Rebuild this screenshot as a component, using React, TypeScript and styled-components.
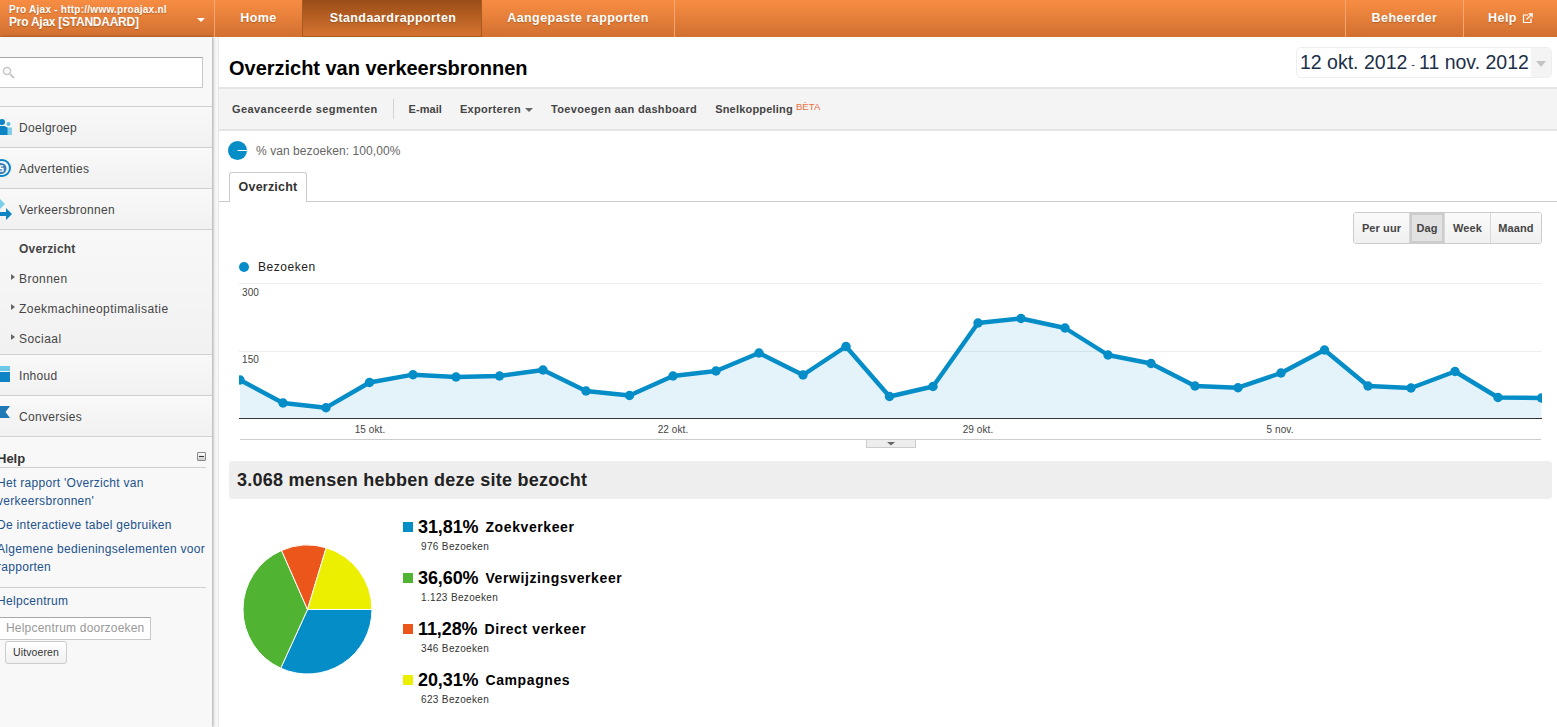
import React from "react";
import styled, { createGlobalStyle } from "styled-components";

const Global = createGlobalStyle`
  html, body { margin: 0; padding: 0; height: 100%; overflow: hidden; background: #fff; }
  body { font-family: "Liberation Sans", Arial, sans-serif; font-size: 12px; color: #333; }
  #root { height: 100%; }
`;

const Page = styled.div`
  width: 1557px; height: 727px; overflow: hidden; display: flex; flex-direction: column;
`;
const TopBar = styled.header`
  flex: none; height: 37px; display: flex; color: #fff;
  background: linear-gradient(#f78d43, #d27030);
`;
const Account = styled.div`
  width: 215px; box-sizing: border-box; border-right: 1px solid #f5a671;
  padding: 4px 0 0 9px; position: relative; font-weight: bold; text-shadow: 0 1px 1px rgba(120,60,10,.45);
`;
const AccountUrl = styled.div`font-size: 10px; line-height: 11px; letter-spacing: .25px; white-space: nowrap;`;
const AccountName = styled.div`font-size: 12px; line-height: 14px; letter-spacing: -.25px; white-space: nowrap;`;
const Caret = styled.span`
  position: absolute; right: 9px; top: 18px; width: 0; height: 0;
  border-left: 4px solid transparent; border-right: 4px solid transparent; border-top: 4px solid #fff;
`;
const NavItem = styled.a<{ $w: number; $active?: boolean; $last?: boolean }>`
  flex: none; width: ${(p) => p.$w}px; box-sizing: border-box; display: flex; align-items: center; justify-content: center; gap: 5px;
  font-size: 12.5px; font-weight: bold; letter-spacing: .45px;
  border-right: ${(p) => (p.$last ? "0" : "1px solid #f5a671")};
  text-shadow: 0 1px 1px rgba(120,60,10,.45); padding-bottom: 1px;
  ${(p) => p.$active && `background: linear-gradient(#9a4d17, #d67431); border: 1px solid #a85a20; border-top: 0; margin-left: -1px; width: ${p.$w + 1}px; padding-left: 2px; letter-spacing: .4px;`}
`;
const NavSpacer = styled.div`flex: 1; border-right: 1px solid #f5a671;`;

const Body = styled.div`flex: 1; display: flex; min-height: 0;`;
const Sidebar = styled.aside`
  flex: none; width: 212px; box-sizing: border-box; background: #f8f8f8; overflow: hidden;
  box-shadow: 1px 0 3px rgba(0,0,0,.35); position: relative; z-index: 1;
`;
const Gutter = styled.div`flex: none; width: 7px; background: #f8f8f8; border-right: 1px solid #e6e6e6; box-sizing: border-box;`;
const SearchWrap = styled.div`height: 70px; box-sizing: border-box; padding: 20px 9px 0 0; border-bottom: 1px solid #d0d0d0;`;
const SearchBox = styled.div`
  height: 31px; box-sizing: border-box; margin-left: -3px; background: #fff; border: 1px solid #c8c8c8; border-top-color: #a8a8a8;
  display: flex; align-items: center; padding-left: 4px;
`;
const SectionRow = styled.div`
  height: 41px; box-sizing: border-box; border-bottom: 1px solid #d0d0d0; display: flex; align-items: center; gap: 7px;
  background: linear-gradient(#f9f9f9, #f1f1f1); font-size: 12px; color: #444; letter-spacing: .3px; padding-top: 1px;
`;
const IconSlot = styled.span`flex: none; width: 12px; height: 22px; display: block;`;
const SubList = styled.div`
  height: 125px; box-sizing: border-box; border-bottom: 1px solid #d0d0d0; padding-top: 4px; background: linear-gradient(#f8f8f8, #f1f1f1);
`;
const SubItem = styled.div<{ $bold?: boolean; $arrow?: boolean }>`
  height: 30px; line-height: 30px; padding-left: 19px; position: relative; color: #444; font-size: 12px; letter-spacing: ${(p) => (p.$bold ? ".2px" : ".45px")};
  font-weight: ${(p) => (p.$bold ? "bold" : "normal")};
  ${(p) => p.$arrow && `&::before { content: ""; position: absolute; left: 11px; top: 10px; border-left: 4px solid #666; border-top: 3.5px solid transparent; border-bottom: 3.5px solid transparent; }`}
`;
const HelpBlock = styled.div`padding: 12px 6px 0 0; margin-left: -3px;`;
const HelpHead = styled.div`
  height: 18px; border-bottom: 1px solid #d0d0d0; display: flex; justify-content: space-between; align-items: center;
  font-weight: bold; font-size: 13px; color: #333; margin-bottom: 6px;
`;
const Collapse = styled.span`
  width: 7px; height: 7px; border: 1px solid #888; border-radius: 1px; background: linear-gradient(#fff,#ccc); position: relative; margin-top: -3px;
  &::after { content: ""; position: absolute; left: 1px; right: 1px; top: 3px; height: 1px; background: #333; }
`;
const HelpLinks = styled.div`margin-right: -6px;`;
const HelpLink = styled.a`display: block; color: #22528c; font-size: 12px; line-height: 18px; margin-bottom: 6px; letter-spacing: .3px;`;
const HelpRule = styled.div`border-top: 1px solid #d0d0d0; margin-top: 11px; padding-top: 4px;`;
const HelpSearch = styled.div`
  width: 154px; height: 23px; box-sizing: border-box; background: #fff; border: 1px solid #c8c8c8; border-top-color: #a8a8a8; margin-top: 7px;
  color: #999; font-size: 12px; line-height: 21px; padding-left: 8px; letter-spacing: .2px; white-space: nowrap;
`;
const RunButton = styled.div`
  width: 62px; height: 23px; box-sizing: border-box; margin: 1px 0 0 8px; border: 1px solid #ccc; border-radius: 3px; text-align: center; line-height: 21px;
  font-size: 10.5px; color: #333; background: linear-gradient(#fff, #f0f0f0); letter-spacing: .1px;
`;

const Main = styled.main`flex: 1; min-width: 0; display: flex; flex-direction: column;`;
const TitleRow = styled.div`height: 50px; box-sizing: border-box; display: flex; justify-content: space-between; padding: 10px 5px 0 10px;`;
const Title = styled.h1`margin: 9px 0 0; font-size: 20px; line-height: 24px; font-weight: bold; color: #000; letter-spacing: -.02px;`;
const DateBox = styled.div`
  height: 31px; box-sizing: border-box; width: 256px; border: 1px solid #eee; border-radius: 5px; display: flex; align-items: center; padding-left: 3px;
  font-size: 19.5px; color: #1c2f48; position: relative; overflow: hidden; white-space: nowrap; letter-spacing: 0;
`;
const DateDash = styled.span`font-size: 11px; margin: 3px 4px 0;`;
const DateArrow = styled.span`
  position: absolute; right: 0; top: 0; bottom: 0; width: 20px; background: #f4f4f4;
  &::after { content: ""; position: absolute; left: 5px; top: 13px; border-left: 5.5px solid transparent; border-right: 5.5px solid transparent; border-top: 6px solid #c4c4c4; }
`;
const Toolbar = styled.div`
  height: 44px; box-sizing: border-box; background: #f4f4f4; border-top: 2px solid #e5e5e5; border-bottom: 2px solid #e5e5e5;
  display: flex; align-items: center; padding-left: 13px; font-size: 11px; font-weight: bold; color: #444;
`;
const ToolItem = styled.span<{ $ml?: number; $ls: number }>`margin-left: ${(p) => p.$ml ?? 0}px; letter-spacing: ${(p) => p.$ls}px; white-space: nowrap;`;
const ToolSep = styled.span`width: 1px; height: 20px; background: #d4d4d4; margin-left: 15px;`;
const ToolCaret = styled.span`display: inline-block; margin-left: 4px; vertical-align: 1px; border-left: 4px solid transparent; border-right: 4px solid transparent; border-top: 4px solid #666;`;
const Beta = styled.span`font-size: 9.5px; font-weight: normal; color: #e8703a; margin-left: 3px; position: relative; top: -3px; letter-spacing: .1px;`;
const SegmentRow = styled.div`height: 41px; box-sizing: border-box; padding: 0 0 2px 9px; display: flex; align-items: center; gap: 9px; color: #666; letter-spacing: .07px; font-size: 12px;`;
const TabRow = styled.div`height: 30px; box-sizing: border-box; border-bottom: 1px solid #ccc; padding-left: 10px; display: flex;`;
const Tab = styled.div`
  width: 78px; height: 30px; box-sizing: border-box; border: 1px solid #ccc; border-bottom: 0; border-radius: 3px 3px 0 0; background: #fff;
  text-align: center; line-height: 29px; font-size: 12.5px; font-weight: bold; color: #333; letter-spacing: .2px;
`;
const RangeRow = styled.div`display: flex; justify-content: flex-end; padding: 10px 15px 0 0;`;
const RangeGroup = styled.div`display: flex; height: 32px; box-sizing: border-box; border: 1px solid #ccc; border-radius: 3px; overflow: hidden;`;
const RangeBtn = styled.div<{ $w: number; $active?: boolean }>`
  width: ${(p) => p.$w}px; box-sizing: border-box; text-align: center; line-height: 30px; font-size: 11px; font-weight: bold; color: #444; letter-spacing: .1px;
  background: ${(p) => (p.$active ? "#e2e2e2" : "linear-gradient(#fafafa,#f0f0f0)")};
  ${(p) => p.$active && "box-shadow: inset 0 0 0 2px #ccc;"}
  & + & { border-left: 1px solid #d8d8d8; }
`;
const Legend = styled.div`height: 21px; margin-top: 12px; display: flex; align-items: center; gap: 9px; padding-left: 20px; font-size: 12px; color: #222; letter-spacing: .55px;`;
const LegendDot = styled.span`width: 10px; height: 10px; border-radius: 50%; background: #058dc7;`;
const ChartSvg = styled.svg`display: block; flex: none; text { font-family: "Liberation Sans", Arial, sans-serif; font-size: 10px; fill: #444; letter-spacing: .1px; }`;
const Banner = styled.div`
  margin: 12px 5px 0 10px; height: 38px; background: #eee; border-radius: 4px; display: flex; align-items: center; padding-left: 8px;
  font-size: 18px; font-weight: bold; color: #222; letter-spacing: .25px;
`;
const Breakdown = styled.div`display: flex; margin-top: 17px; padding-left: 22px;`;
const PieSvg = styled.svg`display: block; flex: none; margin-top: 27px;`;
const LegendList = styled.div`margin-left: 30px; display: flex; flex-direction: column;`;
const Entry = styled.div`height: 51px;`;
const EntryHead = styled.div`display: flex; align-items: center; height: 22px; color: #000; font-weight: bold; white-space: nowrap;`;
const Swatch = styled.span<{ $c: string }>`width: 10px; height: 10px; background: ${(p) => p.$c}; margin-right: 5px;`;
const Pct = styled.span`font-size: 18px; margin-right: 7px; letter-spacing: -.1px;`;
const Name = styled.span`font-size: 14px; letter-spacing: .6px;`;
const EntrySub = styled.div`font-size: 10px; color: #333; padding-left: 18px; line-height: 13px; margin-top: 2px; letter-spacing: .35px;`;

const points: [number, number][] = [
  [240, 380], [283, 403], [326, 407.7], [369.5, 382.5], [413, 374.7], [456, 377], [499.5, 376], [543, 370], [586, 391],
  [629.5, 395.5], [673, 376], [716, 371], [759, 353], [803, 375], [846, 346.5], [889.5, 396.5], [933, 386.5], [978, 323],
  [1021, 318.5], [1065, 328], [1108, 355], [1151, 363.5], [1195, 386], [1238, 387.7], [1281, 373], [1324.5, 350], [1368, 386],
  [1411, 388], [1455, 371.5], [1498, 397.5], [1541.5, 398],
];
const OX = 219, OY = 277;
const px = (x: number) => x - OX;
const py = (y: number) => y - OY;

function Chart() {
  const line = points.map(([x, y]) => `${px(x)},${py(y)}`).join(" ");
  const area = `${px(240)},${py(418)} ${line} ${px(1541.5)},${py(418)}`;
  return (
    <ChartSvg width={1338} height={172} viewBox="0 0 1338 172">
      <defs>
        <clipPath id="plot">
          <rect x={px(239)} y={py(280)} width={1303} height={140} />
        </clipPath>
      </defs>
      <line x1={px(239)} x2={px(1542)} y1={py(283.5)} y2={py(283.5)} stroke="#eee" />
      <line x1={px(239)} x2={px(1542)} y1={py(351.5)} y2={py(351.5)} stroke="#eee" />
      <polygon points={area} fill="#058dc7" fillOpacity={0.11} />
      <line x1={px(239)} x2={px(1542)} y1={py(418.5)} y2={py(418.5)} stroke="#333" />
      <line x1={px(240)} x2={px(1541)} y1={py(439.5)} y2={py(439.5)} stroke="#ccc" />
      <g clipPath="url(#plot)">
        <polyline points={line} fill="none" stroke="#058dc7" strokeWidth={4.4} strokeLinejoin="round" />
        {points.map(([x, y]) => (
          <circle key={x} cx={px(x)} cy={py(y)} r={4.7} fill="#058dc7" />
        ))}
      </g>
      <text x={px(242)} y={py(296)}>300</text>
      <text x={px(242)} y={py(363)}>150</text>
      <text x={px(370)} y={py(433)} textAnchor="middle">15 okt.</text>
      <text x={px(673)} y={py(433)} textAnchor="middle">22 okt.</text>
      <text x={px(978)} y={py(433)} textAnchor="middle">29 okt.</text>
      <text x={px(1280)} y={py(433)} textAnchor="middle">5 nov.</text>
      <rect x={px(866.5)} y={py(439.5)} width={49} height={8} fill="#ededed" stroke="#ccc" />
      <polygon points={`${px(887)},${py(442)} ${px(895)},${py(442)} ${px(891)},${py(445.5)}`} fill="#666" />
    </ChartSvg>
  );
}

const slices = [
  { pct: 31.81, label: "31,81%", name: "Zoekverkeer", sub: "976 Bezoeken", color: "#058dc7" },
  { pct: 36.6, label: "36,60%", name: "Verwijzingsverkeer", sub: "1.123 Bezoeken", color: "#50b432" },
  { pct: 11.28, label: "11,28%", name: "Direct verkeer", sub: "346 Bezoeken", color: "#ed561b" },
  { pct: 20.31, label: "20,31%", name: "Campagnes", sub: "623 Bezoeken", color: "#edef00" },
];

function Pie() {
  let acc = 0;
  const R = 64.5, C = 66.5;
  return (
    <PieSvg width={132} height={132} viewBox="0 0 132 132">
      {slices.map((s) => {
        const a0 = (acc / 100) * Math.PI * 2;
        acc += s.pct;
        const a1 = (acc / 100) * Math.PI * 2;
        const d = `M${C} ${C}L${C + R * Math.cos(a0)} ${C + R * Math.sin(a0)}A${R} ${R} 0 ${s.pct > 50 ? 1 : 0} 1 ${C + R * Math.cos(a1)} ${C + R * Math.sin(a1)}Z`;
        return <path key={s.name} d={d} fill={s.color} stroke="#fff" strokeWidth={1} strokeLinejoin="round" />;
      })}
    </PieSvg>
  );
}

const PeopleIcon = () => (
  <svg width="12" height="22" viewBox="0 0 12 22">
    <circle cx="8.5" cy="7" r="2" fill="#58bfe3" />
    <path d="M6 10.5h6V18H6z" fill="#7fcde8" />
    <circle cx="2" cy="5" r="3" fill="#0d85c4" />
    <path d="M-3 9h7.5l3 1.5V18H-3z" fill="#0d85c4" />
  </svg>
);
const AdsIcon = () => (
  <svg width="12" height="22" viewBox="0 0 12 22">
    <circle cx="2" cy="10" r="9" fill="#0d85c4" />
    <circle cx="2" cy="10" r="7" fill="#f0f6fa" />
    <circle cx="1" cy="10.5" r="5.5" fill="#3d7fb5" />
    <path d="M3.2 7.8H.2v2.7h2.8v2.7H-1" fill="none" stroke="#fff" strokeWidth="1.3" />
  </svg>
);
const TrafficIcon = () => (
  <svg width="12" height="22" viewBox="0 0 12 22">
    <path d="M0 0l5 5-5 5-5-5z" fill="#78cfe9" />
    <path d="M-2 13h8V9l6 6-6 6v-4h-8z" fill="#0d85c4" />
  </svg>
);
const ContentIcon = () => (
  <svg width="12" height="22" viewBox="0 0 12 22">
    <path d="M0 1h10v5H0z" fill="#6ccae8" />
    <path d="M0 7h10v10H0z" fill="#0d85c4" />
  </svg>
);
const FlagIcon = () => (
  <svg width="12" height="22" viewBox="0 0 12 22">
    <path d="M0 0h10L5.5 6 10 12H0z" fill="#1f79b4" />
  </svg>
);

const SearchIcon = () => (
  <svg width="13" height="13" viewBox="0 0 13 13" fill="none" stroke="#c8c8c8">
    <circle cx="5" cy="5" r="3.5" strokeWidth="1.6" />
    <path d="M8 8l4 4" strokeWidth="2.2" />
  </svg>
);
const ExternalIcon = () => (
  <svg width="11" height="11" viewBox="0 0 11 11" fill="none" stroke="#fff" strokeWidth="1.2">
    <path d="M6 2H1.5v7.5H9V5.5" />
    <path d="M4.5 6.5L10 1M6.5 .8H10.2V4.5" />
  </svg>
);
const SegmentIcon = () => (
  <svg width="19" height="19" viewBox="0 0 19 19" style={{ flex: "none" }}>
    <circle cx="9.5" cy="9.5" r="9.5" fill="#058dc7" />
    <path d="M9.5 9.5H19" stroke="#fff" strokeWidth="1" />
  </svg>
);

export default function App() {
  return (
    <Page>
      <Global />
      <TopBar>
        <Account>
          <AccountUrl>Pro Ajax - http://www.proajax.nl</AccountUrl>
          <AccountName>Pro Ajax [STANDAARD]</AccountName>
          <Caret />
        </Account>
        <NavItem $w={88}>Home</NavItem>
        <NavItem $w={179} $active>Standaardrapporten</NavItem>
        <NavItem $w={193}>Aangepaste rapporten</NavItem>
        <NavSpacer />
        <NavItem $w={118}>Beheerder</NavItem>
        <NavItem $w={93} $last>Help <ExternalIcon /></NavItem>
      </TopBar>
      <Body>
        <Sidebar>
          <SearchWrap>
            <SearchBox><SearchIcon /></SearchBox>
          </SearchWrap>
          <SectionRow><IconSlot><PeopleIcon /></IconSlot>Doelgroep</SectionRow>
          <SectionRow><IconSlot><AdsIcon /></IconSlot>Advertenties</SectionRow>
          <SectionRow><IconSlot><TrafficIcon /></IconSlot>Verkeersbronnen</SectionRow>
          <SubList>
            <SubItem $bold>Overzicht</SubItem>
            <SubItem $arrow>Bronnen</SubItem>
            <SubItem $arrow>Zoekmachineoptimalisatie</SubItem>
            <SubItem $arrow>Sociaal</SubItem>
          </SubList>
          <SectionRow><IconSlot><ContentIcon /></IconSlot>Inhoud</SectionRow>
          <SectionRow><IconSlot><FlagIcon /></IconSlot>Conversies</SectionRow>
          <HelpBlock>
            <HelpHead>Help<Collapse /></HelpHead>
            <HelpLinks>
              <HelpLink>Het rapport 'Overzicht van verkeersbronnen'</HelpLink>
              <HelpLink>De interactieve tabel gebruiken</HelpLink>
              <HelpLink>Algemene bedieningselementen voor rapporten</HelpLink>
            </HelpLinks>
            <HelpRule>
              <HelpLink>Helpcentrum</HelpLink>
              <HelpSearch>Helpcentrum doorzoeken</HelpSearch>
              <RunButton>Uitvoeren</RunButton>
            </HelpRule>
          </HelpBlock>
        </Sidebar>
        <Gutter />
        <Main>
          <TitleRow>
            <Title>Overzicht van verkeersbronnen</Title>
            <DateBox>12 okt. 2012<DateDash>-</DateDash>11 nov. 2012<DateArrow /></DateBox>
          </TitleRow>
          <Toolbar>
            <ToolItem $ls={0.42}>Geavanceerde segmenten</ToolItem>
            <ToolSep />
            <ToolItem $ml={15} $ls={0.05}>E-mail</ToolItem>
            <ToolItem $ml={18} $ls={0.3}>Exporteren<ToolCaret /></ToolItem>
            <ToolItem $ml={18} $ls={0.33}>Toevoegen aan dashboard</ToolItem>
            <ToolItem $ml={18} $ls={0.2}>Snelkoppeling<Beta>BÈTA</Beta></ToolItem>
          </Toolbar>
          <SegmentRow><SegmentIcon />% van bezoeken: 100,00%</SegmentRow>
          <TabRow><Tab>Overzicht</Tab></TabRow>
          <RangeRow>
            <RangeGroup>
              <RangeBtn $w={55}>Per uur</RangeBtn>
              <RangeBtn $w={35} $active>Dag</RangeBtn>
              <RangeBtn $w={46}>Week</RangeBtn>
              <RangeBtn $w={51}>Maand</RangeBtn>
            </RangeGroup>
          </RangeRow>
          <Legend><LegendDot />Bezoeken</Legend>
          <Chart />
          <Banner>3.068 mensen hebben deze site bezocht</Banner>
          <Breakdown>
            <Pie />
            <LegendList>
              {slices.map((s) => (
                <Entry key={s.name}>
                  <EntryHead><Swatch $c={s.color} /><Pct>{s.label}</Pct><Name>{s.name}</Name></EntryHead>
                  <EntrySub>{s.sub}</EntrySub>
                </Entry>
              ))}
            </LegendList>
          </Breakdown>
        </Main>
      </Body>
    </Page>
  );
}
